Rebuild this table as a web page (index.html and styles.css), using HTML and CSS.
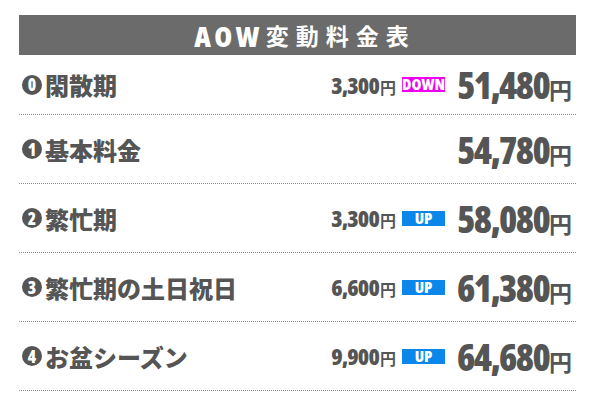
FILE: index.html
```html
<!DOCTYPE html>
<html lang="ja">
<head>
<meta charset="utf-8">
<link rel="stylesheet" href="styles.css">
</head>
<body>
<div class="table">
  <div class="head"><span class="head-en">AOW</span><span class="head-ja">変動料金表</span></div>
  <div class="row first">
    <div class="label"><span class="num">0</span>閑散期</div>
    <div class="diff"><span class="d-num">3,300</span><span class="yen-s">円</span></div>
    <div class="badge down">DOWN</div>
    <div class="price"><span class="p-num">51,480</span><span class="yen">円</span></div>
  </div>
  <div class="row">
    <div class="label"><span class="num">1</span>基本料金</div>
    <div class="diff"></div>
    <div class="badge none"></div>
    <div class="price"><span class="p-num">54,780</span><span class="yen">円</span></div>
  </div>
  <div class="row">
    <div class="label"><span class="num">2</span>繁忙期</div>
    <div class="diff"><span class="d-num">3,300</span><span class="yen-s">円</span></div>
    <div class="badge up">UP</div>
    <div class="price"><span class="p-num">58,080</span><span class="yen">円</span></div>
  </div>
  <div class="row">
    <div class="label"><span class="num">3</span>繁忙期の土日祝日</div>
    <div class="diff"><span class="d-num">6,600</span><span class="yen-s">円</span></div>
    <div class="badge up">UP</div>
    <div class="price"><span class="p-num">61,380</span><span class="yen">円</span></div>
  </div>
  <div class="row">
    <div class="label"><span class="num">4</span>お盆シーズン</div>
    <div class="diff"><span class="d-num">9,900</span><span class="yen-s">円</span></div>
    <div class="badge up">UP</div>
    <div class="price"><span class="p-num">64,680</span><span class="yen">円</span></div>
  </div>
</div>
</body>
</html>
```
FILE: styles.css
```css
html, body { margin: 0; padding: 0; background: #fff; }
body { font-family: "Noto Sans CJK JP", sans-serif; color: #555; }
.table { margin: 15px 0 0 19px; width: 557px; }
.head {
  height: 40px; background: #6b6b6b; color: #fff;
  display: flex; align-items: center; justify-content: center;
  padding-left: 15px; box-sizing: border-box;
}
.head-en {
  font-family: "Open Sans", sans-serif;
  font-stretch: 75%;
  font-weight: 800; font-size: 29px; letter-spacing: 3.5px; line-height: 1;
  margin-right: 3px;
}
.head-ja { font-weight: 700; font-size: 23px; letter-spacing: 7px; line-height: 1; }
.row {
  display: grid;
  grid-template-columns: 1fr 100px 43px 125px;
  column-gap: 6px;
  align-items: center;
  height: 69px;
  border-bottom: 1px dotted #8a8a8a;
  box-sizing: border-box;
}
.row.first { height: 60px; }
.label { font-weight: 900; font-size: 24px; display: flex; align-items: center; padding-left: 3px; }
.num {
  width: 20px; height: 20px; border-radius: 50%; background: #555; color: #fff;
  font-family: "Open Sans", sans-serif; font-stretch: 75%; font-weight: 800; font-size: 17px;
  line-height: 1;
  display: flex; align-items: center; justify-content: center; margin-right: 3px;
}
.diff {
  text-align: right; white-space: nowrap;
  font-family: "Open Sans", sans-serif; font-stretch: 75%;
  font-weight: 800;
}
.d-num { font-size: 23px; letter-spacing: -0.8px; }
.yen-s { font-family: "Noto Sans CJK JP", sans-serif; font-weight: 700; font-size: 16px; margin-left: 1px; }
.badge {
  height: 15px; color: #fff; font-family: "Open Sans", sans-serif; font-stretch: 75%;
  font-weight: 800; font-size: 16px; line-height: 15px; text-align: center;
}
.badge.down { background: #ee00ee; }
.badge.up { background: #0a87e8; }
.badge.none { background: none; }
.price {
  font-family: "Open Sans", sans-serif; font-stretch: 75%;
  font-weight: 800; padding-left: 6px; white-space: nowrap;
}
.p-num { font-size: 37px; letter-spacing: -1.6px; }
.yen { font-family: "Noto Sans CJK JP", sans-serif; font-weight: 700; font-size: 23px; margin-left: 0; }
```
